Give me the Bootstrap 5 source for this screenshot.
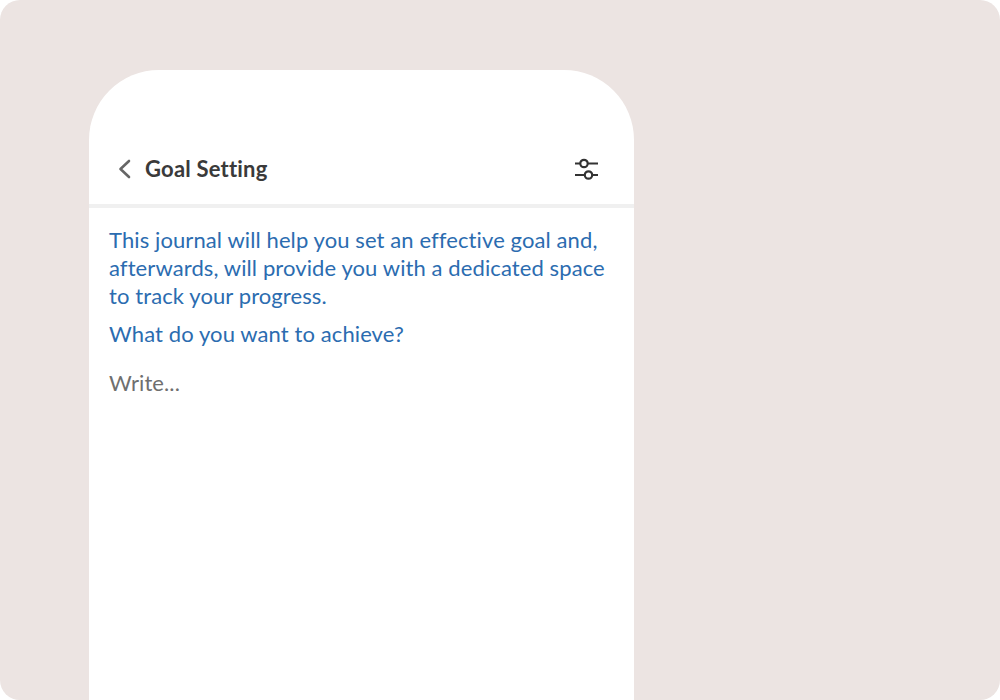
<!DOCTYPE html>
<html lang="en">
<head>
<meta charset="utf-8">
<title>Goal Setting</title>
<link href="https://cdn.jsdelivr.net/npm/bootstrap@5.3.0/dist/css/bootstrap.min.css" rel="stylesheet">
<style>
html, body { height: 100%; background: #fff; overflow: hidden; }
.stage { width: 1000px; height: 700px; background: #ece4e2; border-radius: 20px; padding: 70px 0 0 89px; overflow: hidden; font-family: "Lato", "Noto Sans", sans-serif; }
.phone { width: 545px; height: 630px; background: #fff; border-radius: 70px 70px 0 0; padding-top: 70px; }
.head { padding: 0 35px 6px 28px; border-bottom: 4px solid #f0f0f0; box-sizing: content-box; height: 58px; }
.head-title { font-size: 22px; font-weight: 700; color: #3a3a3a; margin-left: 12px; line-height: 1; letter-spacing: .2px; }
.copy { padding: 18px 20px 0; color: #2b6cb0; font-size: 22px; line-height: 28px; letter-spacing: .1px; }
.copy p { margin: 0; }
.copy .ask { margin-top: 10px; }
.write-hint { color: #6f6f6f; line-height: 28px; margin-top: 21px; }
</style>
</head>
<body>
<div class="stage">
  <div class="phone">
    <div class="head d-flex align-items-center justify-content-between">
      <div class="d-flex align-items-center">
        <svg width="16" height="20" viewBox="0 0 16 20" fill="none" stroke="#666" stroke-width="2.6" stroke-linecap="round" stroke-linejoin="round"><path d="M12 2 L3.5 10 L12 18"/></svg>
        <span class="head-title">Goal Setting</span>
      </div>
      <svg width="24" height="24" viewBox="0 0 24 24" fill="none" stroke="#333" stroke-width="2.2"><path d="M0 6.500H5.300M12.700 6.500H23M0 18H9.800M17.200 18H23"/><circle cx="9" cy="6.500" r="3.700"/><circle cx="13.500" cy="18" r="3.700"/></svg>
    </div>
    <div class="copy">
      <p>This journal will help you set an effective goal and, afterwards, will provide you with a dedicated space to track your progress.</p>
      <p class="ask">What do you want to achieve?</p>
      <div class="write-hint">Write...</div>
    </div>
  </div>
</div>
<script src="https://cdn.jsdelivr.net/npm/bootstrap@5.3.0/dist/js/bootstrap.bundle.min.js"></script>
</body>
</html>
